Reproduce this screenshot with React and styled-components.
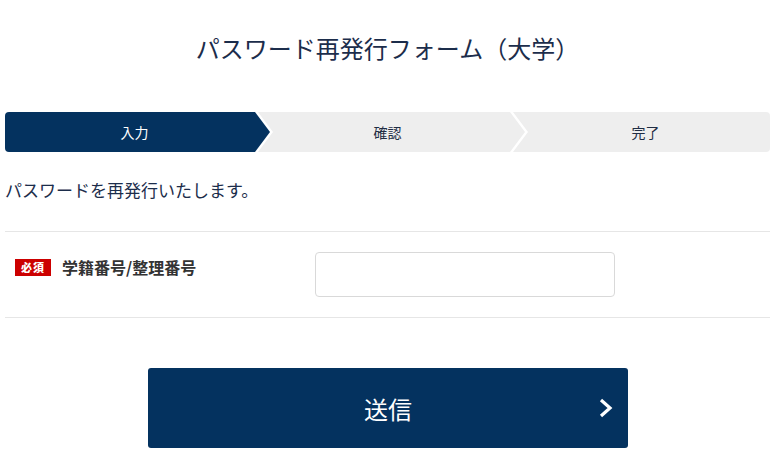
import React from 'react'
import styled, { createGlobalStyle } from 'styled-components'

const Global = createGlobalStyle`
body{
    margin:0;
    background:#fff;
    font-family:"Noto Sans CJK JP","Noto Sans",sans-serif;
}
`

const steps = [
    { label: '入力', width: 265, shift: -3 },
    { label: '確認', width: 267, shift: -4 },
    { label: '完了', width: 257, shift: 4 },
]

function App() {
  return (
    <Page>
        <Global />
        <Title>パスワード再発行フォーム（大学）</Title>
        <Steps>
            {steps.map((step, i) => (
                <Step
                    key={step.label}
                    active={i === 0}
                    first={i === 0}
                    last={i === steps.length - 1}
                    w={step.width}
                    shift={step.shift}
                >
                    {step.label}
                </Step>
            ))}
        </Steps>
        <Lead>パスワードを再発行いたします。</Lead>
        <Row>
            <LabelCell>
                <Badge>必須</Badge>
                <Label>学籍番号/整理番号</Label>
            </LabelCell>
            <Input type="text" />
        </Row>
        <Submit type="button">
            送信
            <Chevron width="14" height="20" viewBox="0 0 14 20">
                <polyline points="2,2 11,10 2,18" fill="none" stroke="#fff" strokeWidth="3.2" />
            </Chevron>
        </Submit>
    </Page>
  )
}

const Page = styled.div`
width:765px;
margin-left:5px;
`
const Title = styled.h1`
margin:0;
padding-top:31px;
font-size:24px;
line-height:34px;
font-weight:400;
color:#1c2d4b;
text-align:center;
`
const Steps = styled.ol`
display:flex;
list-style:none;
margin:47px 0 0;
padding:0;
height:40px;
`
const Step = styled.li`
box-sizing:border-box;
flex:0 0 ${p => p.w}px;
display:flex;
align-items:center;
justify-content:center;
padding-left:${p => p.shift > 0 ? p.shift * 2 : 0}px;
padding-right:${p => p.shift < 0 ? -p.shift * 2 : 0}px;
font-size:14px;
color:${p => p.active ? '#fff' : '#1f2d44'};
background:${p => p.active ? '#04325f' : '#eeeeee'};
margin-left:${p => p.first ? '0' : '-12px'};
border-radius:${p => p.first ? '4px 0 0 4px' : p.last ? '0 4px 4px 0' : '0'};
clip-path:${p => p.first
    ? 'polygon(0 0, calc(100% - 15px) 0, 100% 50%, calc(100% - 15px) 100%, 0 100%)'
    : p.last
    ? 'polygon(0 0, 100% 0, 100% 100%, 0 100%, 15px 50%)'
    : 'polygon(0 0, calc(100% - 15px) 0, 100% 50%, calc(100% - 15px) 100%, 0 100%, 15px 50%)'};
`
const Lead = styled.p`
margin:26px 0 0;
font-size:17px;
line-height:24px;
color:#1c2d4b;
`
const Row = styled.div`
display:flex;
align-items:flex-start;
margin-top:29px;
padding:20px 0 20px 10px;
border-top:1px solid #e6e6e6;
border-bottom:1px solid #e6e6e6;
`
const LabelCell = styled.div`
width:300px;
display:flex;
align-items:center;
gap:11px;
padding-top:3px;
`
const Badge = styled.span`
display:inline-flex;
align-items:center;
justify-content:center;
width:36px;
height:17px;
background:#cc0000;
color:#fff;
font-size:11px;
font-weight:900;
letter-spacing:1px;
`
const Label = styled.span`
font-size:16px;
font-weight:700;
line-height:24px;
color:#333;
`
const Input = styled.input`
box-sizing:border-box;
width:300px;
height:45px;
border:1px solid #d9d9d9;
border-radius:4px;
background:#fff;
`
const Submit = styled.button`
position:relative;
display:flex;
align-items:center;
justify-content:center;
width:480px;
height:80px;
margin:50px 0 0 143px;
padding:0;
border:none;
border-radius:3px;
background:#04325f;
color:#fff;
font-family:inherit;
font-size:24px;
`
const Chevron = styled.svg`
position:absolute;
right:15px;
top:30px;
`

export default App
